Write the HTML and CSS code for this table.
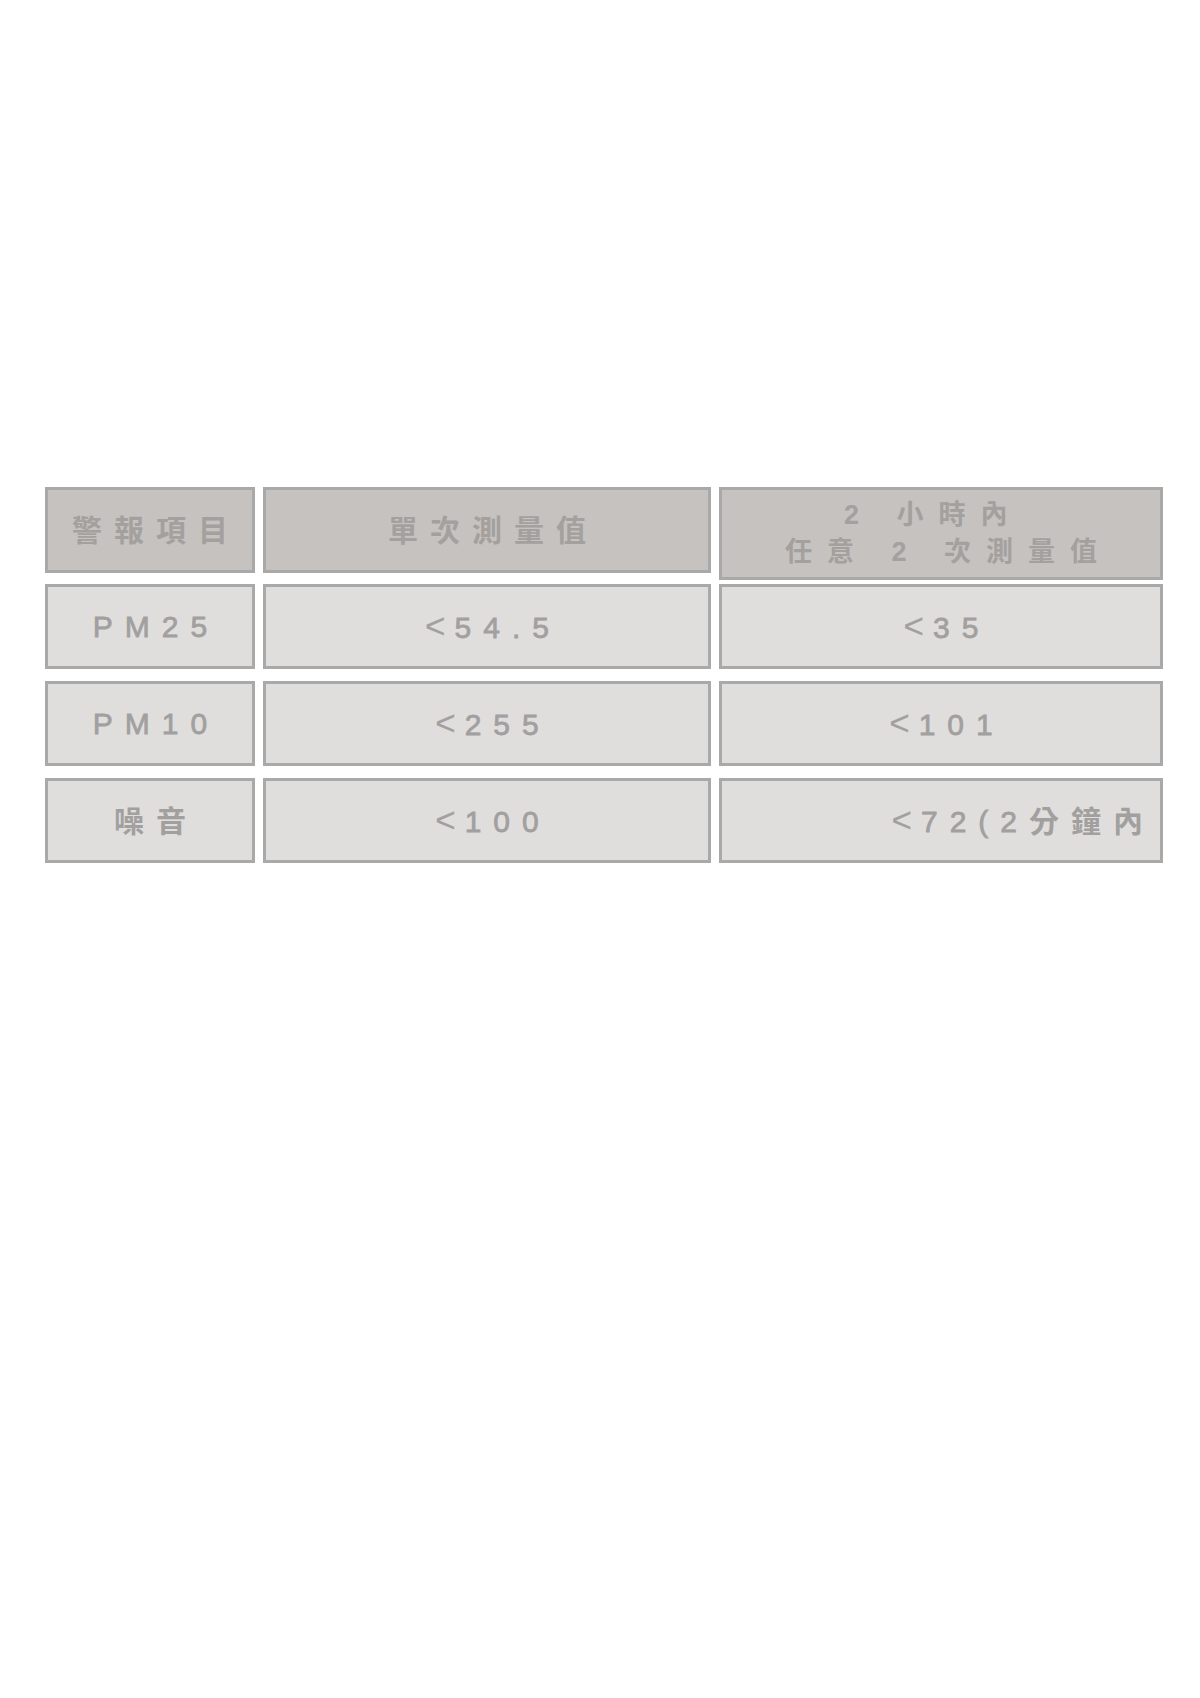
FILE: index.html
```html
<!DOCTYPE html>
<html lang="zh-Hant">
<head>
<meta charset="utf-8">
<title>警報項目</title>
<link rel="stylesheet" href="styles.css">
</head>
<body>
<main class="page">
  <section class="table">
    <div class="row row-head">
      <div class="cell head"><span class="cjk">警報項目</span></div>
      <div class="cell head"><span class="cjk">單次測量值</span></div>
      <div class="cell head tall">
        <span class="cjk small first">2&nbsp;小時內&nbsp;</span>
        <span class="cjk small">任意&nbsp;2&nbsp;次測量值</span>
      </div>
    </div>
    <div class="row">
      <div class="cell"><span class="lat">PM25</span></div>
      <div class="cell"><span class="lat"><i class="lt">&lt;</i>54.5</span></div>
      <div class="cell"><span class="lat"><i class="lt">&lt;</i>35</span></div>
    </div>
    <div class="row">
      <div class="cell"><span class="lat">PM10</span></div>
      <div class="cell"><span class="lat"><i class="lt">&lt;</i>255</span></div>
      <div class="cell"><span class="lat"><i class="lt">&lt;</i>101</span></div>
    </div>
    <div class="row">
      <div class="cell"><span class="cjk">噪音</span></div>
      <div class="cell"><span class="lat"><i class="lt">&lt;</i>100</span></div>
      <div class="cell end"><span class="lat"><i class="lt">&lt;</i>72(2<b class="cjk-in">分鐘內</b></span></div>
    </div>
  </section>
</main>
</body>
</html>
```
FILE: styles.css
```css
html, body {
  margin: 0;
  padding: 0;
  background: #ffffff;
}

.page {
  width: 1200px;
  min-height: 1698px;
  box-sizing: border-box;
  padding: 487px 0 0 45px;
}

.table {
  display: flex;
  flex-direction: column;
  gap: 12px;
}

.row {
  display: grid;
  grid-template-columns: 210px 448px 444px;
  column-gap: 8px;
  align-items: start;
  height: 85px;
}

.row-head {
  height: 93px;
  margin-bottom: -8px;
}

.cell {
  box-sizing: border-box;
  height: 85px;
  border: 3px solid #a9a9a9;
  background: #e0dedd;
  color: #a2a09f;
  display: flex;
  flex-direction: column;
  align-items: center;
  justify-content: center;
  overflow: hidden;
  white-space: nowrap;
}

.cell.head {
  height: 86px;
  background: #c6c2bf;
  color: #a3a09e;
}

.cell.tall {
  height: 93px;
}

.cell.end {
  align-items: flex-end;
  padding-right: 5px;
}

.lat {
  font-family: "Liberation Sans", "Noto Sans CJK TC", sans-serif;
  font-size: 30px;
  font-weight: 400;
  letter-spacing: 12px;
  padding-left: 12px;
  line-height: 36px;
  -webkit-text-stroke: 0.8px currentColor;
}

.lt {
  font-style: normal;
  font-size: 35px;
  letter-spacing: 9px;
  -webkit-text-stroke: 0.2px currentColor;
}

.cell.end .lat {
  padding-left: 0;
}

.cjk {
  font-family: "Noto Sans CJK TC", "Liberation Sans", sans-serif;
  font-size: 30px;
  font-weight: 700;
  letter-spacing: 12px;
  padding-left: 12px;
  padding-bottom: 4px;
  line-height: 36px;
}

.cjk.small {
  font-family: "Liberation Sans", "Noto Sans CJK TC", sans-serif;
  font-size: 27px;
  letter-spacing: 15px;
  padding-left: 15px;
  padding-bottom: 0;
  line-height: 37px;
}

.cjk.small.first {
  padding-right: 8px;
}

.cjk-in {
  font-family: "Noto Sans CJK TC", sans-serif;
  font-weight: 700;
  -webkit-text-stroke: 0;
}
```
